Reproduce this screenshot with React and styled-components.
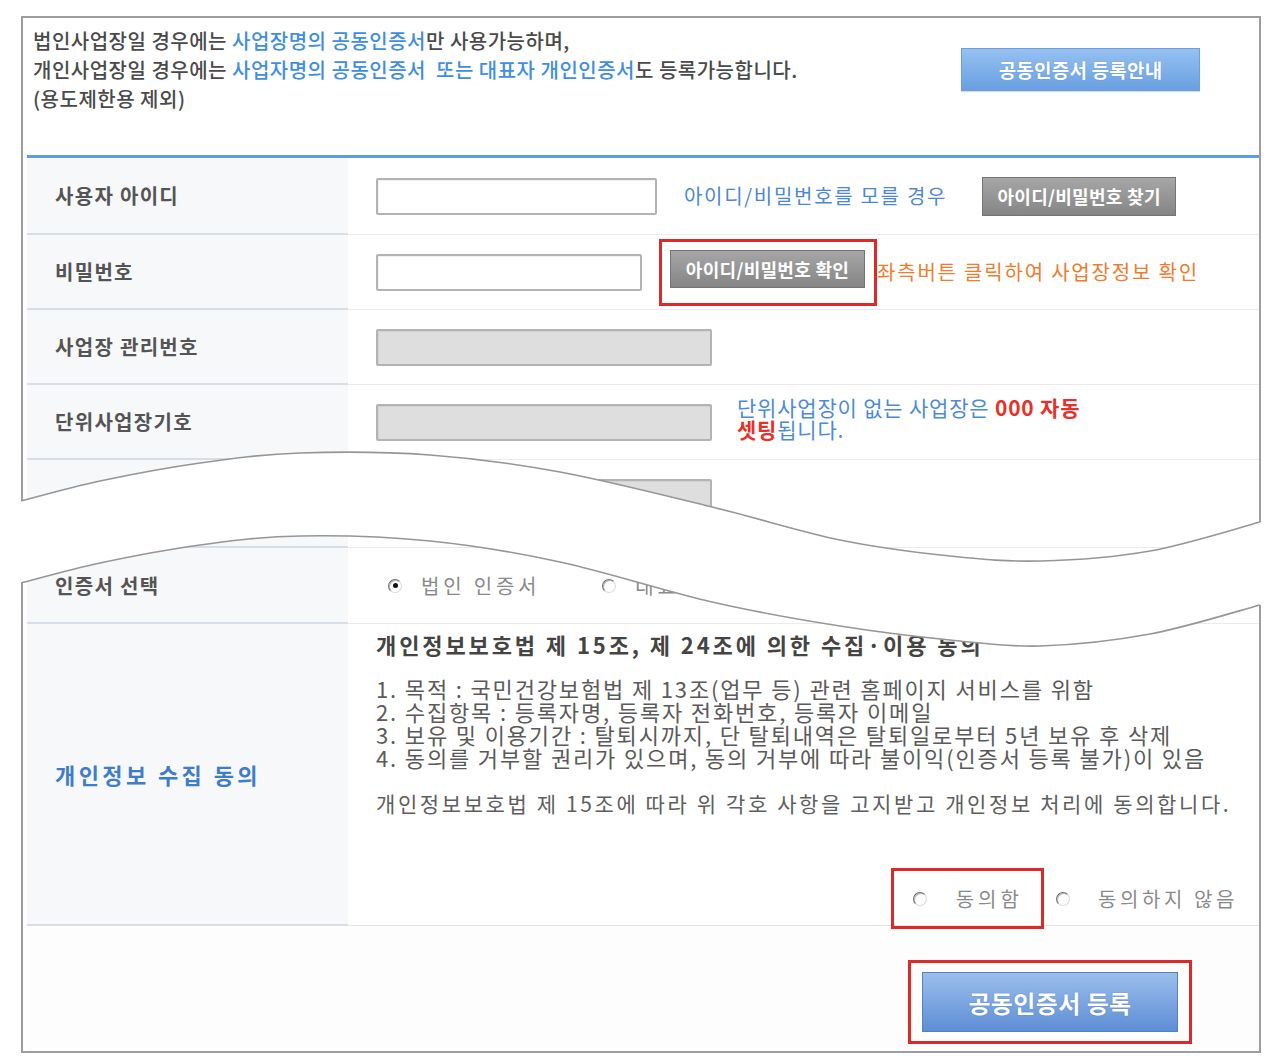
import React from "react";
import styled, { createGlobalStyle } from "styled-components";

const GlobalStyle = createGlobalStyle`
  html, body { margin: 0; padding: 0; background: #fff; }
  body { font-family: "Noto Sans CJK KR", "Noto Sans", sans-serif; color: #4d4d4d; }
  * { box-sizing: border-box; }
`;

const Page = styled.div`
  position: relative;
  width: 1286px;
  height: 1064px;
  padding: 16px 0 0 21px;
  overflow: hidden;
`;

const Frame = styled.div`
  width: 1240px;
  height: 1037px;
  border: 2px solid #9d9d9d;
  padding: 0 0 0 4px;
  display: flex;
  flex-direction: column;
  background: #fff;
`;

const Intro = styled.div`
  height: 137px;
  display: flex;
  justify-content: space-between;
  align-items: flex-start;
  padding: 8px 59px 0 6px;
`;

const IntroText = styled.div`
  font-size: 20px;
  line-height: 29px;
  font-weight: 500;
  color: #4a4a4a;
  letter-spacing: 0.5px;
`;

const Line = styled.div`
  white-space: nowrap;
`;

const Em = styled.span`
  color: #3f8ee2;
`;

const GuideButton = styled.button`
  margin-top: 22px;
  width: 239px;
  height: 43px;
  border: 1px solid #6f9fdb;
  background: linear-gradient(#96c1f1, #689fe2);
  color: #fff;
  font-family: inherit;
  font-size: 19px;
  font-weight: 700;
  letter-spacing: 0.2px;
  text-shadow: 0 0 1px rgba(40, 80, 140, 0.4);
  box-shadow: 0 1px 1px rgba(0, 0, 0, 0.15);
  padding: 0;
`;

const BlueRule = styled.div`
  height: 3px;
  background: #5e9ce6;
`;

const FormRow = styled.div`
  display: grid;
  grid-template-columns: 321px 1fr;
  height: ${(p) => p.$h}px;
`;

const LabelCell = styled.div`
  background: #f7f8fa;
  border-bottom: 2px solid #d7dee8;
  display: flex;
  align-items: center;
  padding-left: 28px;
  font-size: ${(p) => p.$size || 20}px;
  font-weight: 700;
  color: ${(p) => p.$color || "#545454"};
  letter-spacing: ${(p) => p.$ls ?? 1.3}px;
  white-space: nowrap;
`;

const ValueCell = styled.div`
  border-bottom: 1px solid #ebebeb;
  display: flex;
  align-items: ${(p) => (p.$top ? "flex-start" : "center")};
  padding: ${(p) => (p.$top ? `${p.$top}px` : "0")} 0 0 28px;
`;

const PrivacyCell = styled.div`
  border-bottom: 1px solid #e4e4e4;
  display: flex;
  flex-direction: column;
  padding: 7px 21px 0 28px;
`;

const TextInput = styled.input`
  width: ${(p) => p.$w}px;
  height: 37px;
  border: 2px solid #b3b3b3;
  border-radius: 2px;
  background: ${(p) => (p.$disabled ? "#dedede" : "#fff")};
  box-shadow: inset 1px 1px 1px rgba(0, 0, 0, 0.06);
  outline: none;
  padding: 0 6px;
  flex: none;
`;

const Note = styled.span`
  color: ${(p) => p.$color};
  font-size: ${(p) => p.$size || 20}px;
  line-height: 24px;
  letter-spacing: ${(p) => p.$ls || 0}px;
  margin-left: ${(p) => p.$ml || 0}px;
  white-space: nowrap;
`;

const GrayButton = styled.button`
  width: ${(p) => p.$w}px;
  height: ${(p) => p.$hgt}px;
  margin-left: ${(p) => p.$ml || 0}px;
  border: 1px solid #747474;
  background: linear-gradient(#a6a6a6, #858585);
  color: #fff;
  font-family: inherit;
  font-size: 18px;
  font-weight: 700;
  letter-spacing: 0.3px;
  padding: 0;
  flex: none;
`;

const RedBox = styled.div`
  border: 3px solid #dc2a2a;
  padding: ${(p) => p.$pad};
  margin-left: ${(p) => p.$ml || 0}px;
  display: flex;
  align-items: center;
  flex: none;
`;

const NoteBlock = styled.div`
  margin-left: 25px;
  margin-top: -8px;
  font-size: 21px;
  line-height: 22px;
  letter-spacing: 0.8px;
  color: #4d8ad8;
`;

const Red = styled.span`
  color: #e8302b;
  font-weight: 700;
`;

const OptionGroup = styled.div`
  display: flex;
  align-items: center;
  justify-content: ${(p) => (p.$end ? "flex-end" : "flex-start")};
  margin-top: ${(p) => (p.$end ? "auto" : "0")};
  margin-bottom: ${(p) => (p.$end ? "-4px" : "0")};
  position: relative;
`;

const Option = styled.label`
  display: flex;
  align-items: center;
  gap: ${(p) => p.$gap}px;
  margin-left: ${(p) => p.$ml || 0}px;
  font-size: 20px;
  letter-spacing: ${(p) => p.$ls || 3.8}px;
  color: #8a8a8a;
  white-space: nowrap;
`;

const Radio = styled.span`
  width: 14px;
  height: 14px;
  border-radius: 50%;
  flex: none;
  border: 1px solid;
  border-color: #6f6f6f #dcdcdc #dcdcdc #6f6f6f;
  background: #fff;
  box-shadow: inset 1px 1px 0 #b5b5b5;
  display: flex;
  align-items: center;
  justify-content: center;
  &::after {
    content: "";
    width: 5px;
    height: 5px;
    border-radius: 50%;
    background: ${(p) => (p.$checked ? "#111" : "transparent")};
  }
`;

const AgreeBox = styled.div`
  border: 3px solid #dc2a2a;
  height: 61px;
  padding: 0 18px 0 19px;
  display: flex;
  align-items: center;
`;

const PrivacyTitle = styled.div`
  font-size: 22px;
  line-height: 26px;
  font-weight: 700;
  color: #444;
  letter-spacing: 2.9px;
  white-space: nowrap;
`;

const PrivacyList = styled.div`
  margin-top: 20px;
  font-size: 22px;
  line-height: 23px;
  color: #5a5a5a;
  letter-spacing: 1.85px;
  white-space: nowrap;
`;

const PrivacyConsent = styled.div`
  margin-top: 21px;
  font-size: 21px;
  line-height: 26px;
  color: #5e5e5e;
  letter-spacing: 2.6px;
  white-space: nowrap;
`;

const BottomBar = styled.div`
  flex: 1;
  display: flex;
  justify-content: flex-end;
  align-items: flex-start;
  padding: 34px 67px 0 0;
  background: #fdfdfd;
`;

const SubmitButton = styled.button`
  width: 256px;
  height: 60px;
  border: 1px solid #5680c0;
  background: linear-gradient(#9bbeec, #5e8ed5);
  color: #fff;
  font-family: inherit;
  font-size: 24px;
  font-weight: 700;
  letter-spacing: 0.4px;
  text-shadow: 0 0 1px rgba(30, 60, 120, 0.5);
  padding: 0;
`;

const Overlay = styled.svg`
  position: absolute;
  left: 0;
  top: 0;
  z-index: 2;
  pointer-events: none;
`;

function curve(pts) {
  let d = "";
  for (let i = 0; i < pts.length - 1; i++) {
    const p0 = pts[i - 1] || pts[i];
    const p1 = pts[i];
    const p2 = pts[i + 1];
    const p3 = pts[i + 2] || p2;
    const c1x = p1[0] + (p2[0] - p0[0]) / 6;
    const c1y = p1[1] + (p2[1] - p0[1]) / 6;
    const c2x = p2[0] - (p3[0] - p1[0]) / 6;
    const c2y = p2[1] - (p3[1] - p1[1]) / 6;
    d += ` C${c1x.toFixed(1)},${c1y.toFixed(1)} ${c2x.toFixed(1)},${c2y.toFixed(1)} ${p2[0]},${p2[1]}`;
  }
  return d;
}

const TOP = [
  [21, 501], [100, 481], [200, 463], [300, 453], [430, 455], [560, 472],
  [712, 507], [840, 540], [950, 556], [1040, 561], [1150, 551], [1260, 522],
];
const LOWER = [
  [21, 583], [100, 563], [200, 545], [300, 536], [430, 541], [560, 562],
  [712, 602], [840, 626], [950, 640], [1040, 646], [1150, 634], [1260, 605],
];

function WaveCut() {
  const topD = `M${TOP[0][0]},${TOP[0][1]}` + curve(TOP);
  const lowerD = `M${LOWER[0][0]},${LOWER[0][1]}` + curve(LOWER);
  const rev = [...LOWER].reverse();
  const band =
    `M0,${TOP[0][1]} L${TOP[0][0]},${TOP[0][1]}` +
    curve(TOP) +
    ` L1286,${TOP[TOP.length - 1][1]} L1286,${rev[0][1]} L${rev[0][0]},${rev[0][1]}` +
    curve(rev) +
    ` L0,${rev[rev.length - 1][1]} Z`;
  return (
    <Overlay width="1286" height="1064" viewBox="0 0 1286 1064">
      <path d={band} fill="#fff" />
      <path d={topD} fill="none" stroke="#969696" strokeWidth="1.6" />
      <path d={lowerD} fill="none" stroke="#969696" strokeWidth="1.6" />
    </Overlay>
  );
}

export default function App() {
  return (
    <>
      <GlobalStyle />
      <Page>
        <Frame>
          <Intro>
            <IntroText>
              <Line>
                법인사업장일 경우에는 <Em>사업장명의 공동인증서</Em>만 사용가능하며,
              </Line>
              <Line>
                개인사업장일 경우에는 <Em>사업자명의 공동인증서&nbsp; 또는 대표자 개인인증서</Em>도 등록가능합니다.
              </Line>
              <Line>(용도제한용 제외)</Line>
            </IntroText>
            <GuideButton>공동인증서 등록안내</GuideButton>
          </Intro>
          <BlueRule />

          <FormRow $h={77}>
            <LabelCell>사용자 아이디</LabelCell>
            <ValueCell>
              <TextInput $w={281} readOnly />
              <Note $color="#4b87d4" $ml={27} $ls={1.7}>아이디/비밀번호를 모를 경우</Note>
              <GrayButton $w={194} $hgt={39} $ml={35}>아이디/비밀번호 찾기</GrayButton>
            </ValueCell>
          </FormRow>

          <FormRow $h={75}>
            <LabelCell>비밀번호</LabelCell>
            <ValueCell>
              <TextInput $w={266} type="password" readOnly />
              <RedBox $ml={17} $pad="8px 9px 15px 8px">
                <GrayButton $w={195} $hgt={38}>아이디/비밀번호 확인</GrayButton>
              </RedBox>
              <Note $color="#f07b2c" $ls={1.8}>좌측버튼 클릭하여 사업장정보 확인</Note>
            </ValueCell>
          </FormRow>

          <FormRow $h={75}>
            <LabelCell>사업장 관리번호</LabelCell>
            <ValueCell>
              <TextInput $w={336} $disabled readOnly />
            </ValueCell>
          </FormRow>

          <FormRow $h={75}>
            <LabelCell>단위사업장기호</LabelCell>
            <ValueCell>
              <TextInput $w={336} $disabled readOnly />
              <NoteBlock>
                단위사업장이 없는 사업장은 <Red>000 자동</Red>
                <br />
                <Red>셋팅</Red>됩니다.
              </NoteBlock>
            </ValueCell>
          </FormRow>

          <FormRow $h={88}>
            <LabelCell />
            <ValueCell $top={19}>
              <TextInput $w={336} $disabled readOnly />
            </ValueCell>
          </FormRow>

          <FormRow $h={76}>
            <LabelCell>인증서 선택</LabelCell>
            <ValueCell>
              <OptionGroup>
                <Option $gap={19} $ml={12}>
                  <Radio $checked />
                  법인 인증서
                </Option>
                <Option $gap={19} $ml={62}>
                  <Radio />
                  대표자 인증서
                </Option>
              </OptionGroup>
            </ValueCell>
          </FormRow>

          <FormRow $h={302}>
            <LabelCell $color="#3f7dc8" $size={22} $ls={3.4}>개인정보 수집 동의</LabelCell>
            <PrivacyCell>
              <PrivacyTitle>개인정보보호법 제 15조, 제 24조에 의한 수집·이용 동의</PrivacyTitle>
              <PrivacyList>
                <div>1. 목적 : 국민건강보험법 제 13조(업무 등) 관련 홈페이지 서비스를 위함</div>
                <div>2. 수집항목 : 등록자명, 등록자 전화번호, 등록자 이메일</div>
                <div>3. 보유 및 이용기간 : 탈퇴시까지, 단 탈퇴내역은 탈퇴일로부터 5년 보유 후 삭제</div>
                <div>4. 동의를 거부할 권리가 있으며, 동의 거부에 따라 불이익(인증서 등록 불가)이 있음</div>
              </PrivacyList>
              <PrivacyConsent>
                개인정보보호법 제 15조에 따라 위 각호 사항을 고지받고 개인정보 처리에 동의합니다.
              </PrivacyConsent>
              <OptionGroup $end>
                <AgreeBox>
                  <Option $gap={29} $ls={4}>
                    <Radio />
                    동의함
                  </Option>
                </AgreeBox>
                <Option $gap={28} $ml={12} $ls={3.6}>
                  <Radio />
                  동의하지 않음
                </Option>
              </OptionGroup>
            </PrivacyCell>
          </FormRow>

          <BottomBar>
            <RedBox $pad="9px 11px">
              <SubmitButton>공동인증서 등록</SubmitButton>
            </RedBox>
          </BottomBar>
        </Frame>
        <WaveCut />
      </Page>
    </>
  );
}
